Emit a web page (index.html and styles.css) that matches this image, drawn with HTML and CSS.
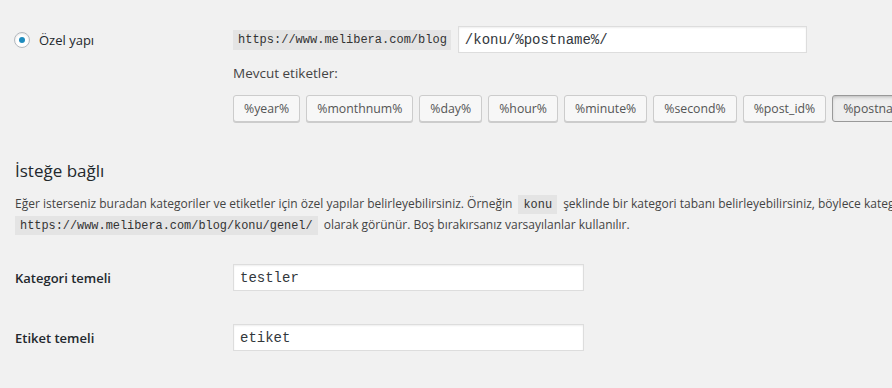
FILE: index.html
```html
<html>

<head>
  <meta charset="utf-8">
  <link rel="stylesheet" href="styles.css">
</head>

<body>
  <div class="wrap">
    <div class="row custom">
      <div class="th">
        <label class="choice"><span class="radio"></span>Özel yapı</label>
      </div>
      <div class="td">
        <div class="structure">
          <code class="base">https://www.melibera.com/blog</code>
          <input type="text" class="code-input wide" value="/konu/%postname%/">
        </div>
        <div class="tags-title">Mevcut etiketler:</div>
        <div class="tags">
          <button class="tag">%year%</button>
          <button class="tag">%monthnum%</button>
          <button class="tag">%day%</button>
          <button class="tag">%hour%</button>
          <button class="tag">%minute%</button>
          <button class="tag">%second%</button>
          <button class="tag">%post_id%</button>
          <button class="tag active">%postname%</button>
          <button class="tag">%category%</button>
        </div>
      </div>
    </div>

    <h2 class="section-title">İsteğe bağlı</h2>
    <p class="intro">Eğer isterseniz buradan kategoriler ve etiketler için özel yapılar belirleyebilirsiniz. Örneğin <code class="inline">konu</code> şeklinde bir kategori tabanı belirleyebilirsiniz, böylece kategori bağlantılarınız<br><code class="inline">https://www.melibera.com/blog/konu/genel/</code> olarak görünür. Boş bırakırsanız varsayılanlar kullanılır.</p>

    <div class="row field">
      <div class="th"><label class="field-label">Kategori temeli</label></div>
      <div class="td"><input type="text" class="code-input" value="testler"></div>
    </div>
    <div class="row field">
      <div class="th"><label class="field-label">Etiket temeli</label></div>
      <div class="td"><input type="text" class="code-input" value="etiket"></div>
    </div>
  </div>
</body>

</html>
```

FILE: styles.css
```css
body {
  margin: 0;
  background: #f1f1f1;
  color: #444;
  font-family: "Open Sans", sans-serif;
  font-size: 12px;
  overflow: hidden;
}

.wrap {
  padding: 26px 0 0 15px;
  width: 1200px;
}

.row {
  display: grid;
  grid-template-columns: 218px 1fr;
}

.th {
  display: flex;
  align-items: center;
  height: 27px;
}

.choice {
  display: flex;
  align-items: center;
  gap: 9px;
  font-size: 13px;
  color: #23282d;
}

.radio {
  width: 14px;
  height: 14px;
  margin-left: -1px;
  border: 1px solid #b4b9be;
  border-radius: 50%;
  background: #fff;
  box-shadow: inset 0 1px 2px rgba(0, 0, 0, 0.1);
  display: flex;
  align-items: center;
  justify-content: center;
}

.radio::before {
  content: "";
  width: 6px;
  height: 6px;
  border-radius: 50%;
  background: #1e8cbe;
}

.structure {
  display: flex;
  align-items: center;
  gap: 7px;
}

code {
  font-family: "Liberation Mono", monospace;
  font-size: 12px;
  background: #e4e4e4;
  color: #333;
}

.base {
  padding: 3px 4px 2px 5px;
  line-height: 15px;
}

.code-input {
  font-family: "Liberation Mono", monospace;
  font-size: 14px;
  color: #32373c;
  height: 27px;
  width: 351px;
  padding: 0 6px;
  box-sizing: border-box;
  background: #fff;
  border: 1px solid #ddd;
  box-shadow: inset 0 1px 2px rgba(0, 0, 0, 0.07);
  outline: none;
}

.wide {
  width: 349px;
}

.tags-title {
  margin-top: 10px;
  line-height: 20px;
  font-size: 13.5px;
}

.tags {
  display: flex;
  gap: 6px;
  margin-top: 12px;
}

.tag {
  font-family: "Open Sans", sans-serif;
  font-size: 12.3px;
  color: #555;
  height: 27px;
  padding: 0 10px 1px;
  white-space: nowrap;
  background: #f7f7f7;
  border: 1px solid #ccc;
  border-radius: 3px;
  box-shadow: 0 1px 0 #ccc;
}

.tag.active {
  background: #eee;
  border-color: #999;
  box-shadow: inset 0 2px 5px -3px rgba(0, 0, 0, 0.5);
}

.section-title {
  font-size: 17px;
  font-weight: 400;
  color: #23282d;
  margin: 37px 0 0;
  line-height: 24px;
}

.intro {
  margin: 11px 0 0;
  line-height: 20px;
  white-space: nowrap;
}

.inline {
  font-size: 11.9px;
  padding: 3px 5px 2px;
  margin: 0 3px;
}

.intro br + .inline {
  margin-left: 0;
}

.field {
  margin-top: 28px;
}

.field + .field {
  margin-top: 33px;
}

.field-label {
  font-size: 13px;
  font-weight: 600;
  color: #23282d;
}
```
